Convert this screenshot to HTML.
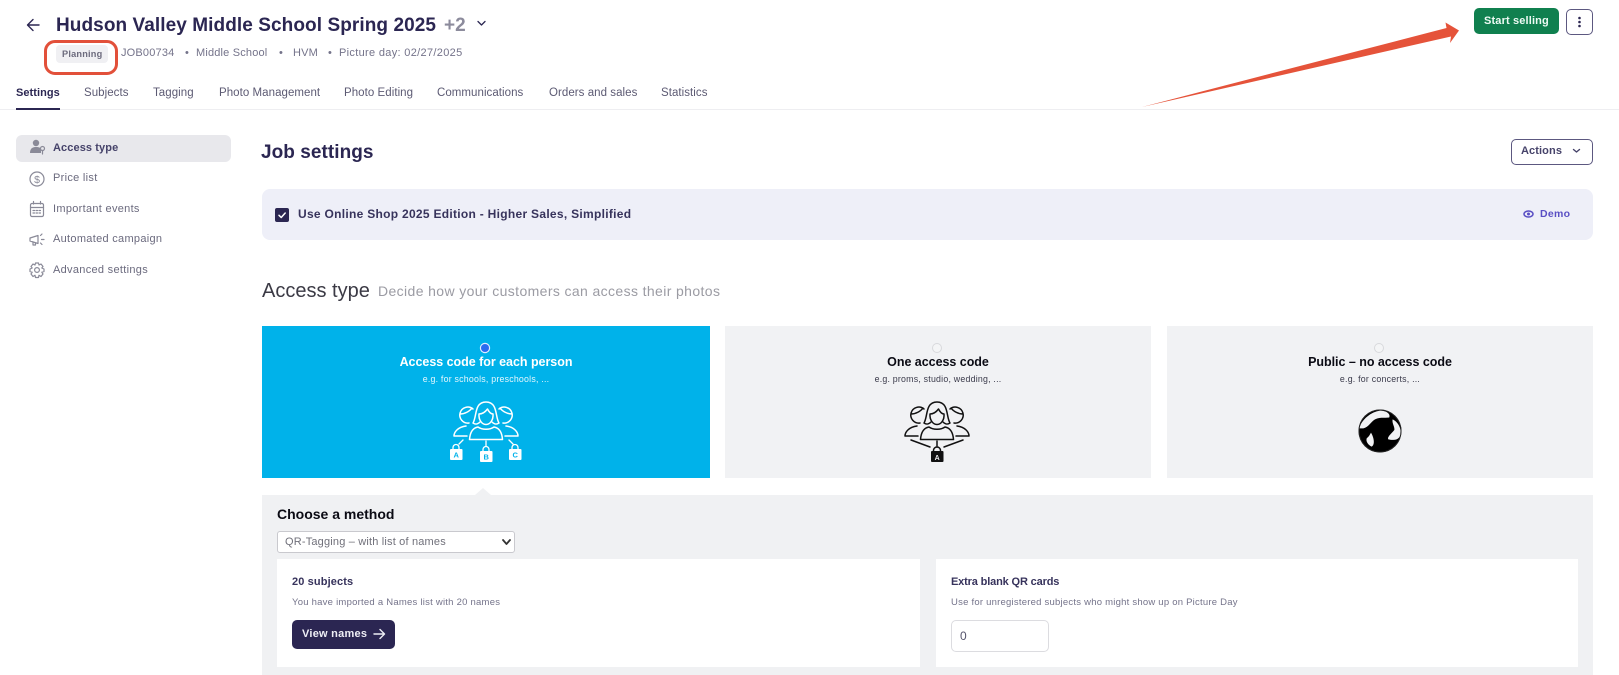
<!DOCTYPE html>
<html lang="en"><head><meta charset="utf-8"><title>Job settings</title>
<style>
html,body{margin:0;padding:0;background:#fff}
body{position:relative;width:1619px;height:675px;overflow:hidden;font-family:"Liberation Sans",sans-serif;color:#2b2652;filter:blur(.3px)}
.t{position:absolute;white-space:nowrap;line-height:20px;height:20px}
.b{position:absolute;box-sizing:border-box}
.tab{font-size:11.5px;letter-spacing:.05px;color:#5c5a73;top:83px}
.side{font-size:11px;letter-spacing:.3px;color:#6b6a7e;left:53px}
.meta{font-size:11px;letter-spacing:.18px;color:#74738a;top:43px}
.head{font-size:12.5px;font-weight:bold;letter-spacing:-.03px;color:#0b0b14;text-align:center;top:352px}
.sub{font-size:8.8px;letter-spacing:.22px;color:#3a3a4a;text-align:center;top:369px}
svg{position:absolute;left:0;top:0;overflow:visible}
</style></head><body>

<!-- header -->
<div class="t" style="left:56px;top:15px;font-size:19px;line-height:22px;height:22px;font-weight:bold;letter-spacing:.08px;color:#2b2652">Hudson Valley Middle School Spring 2025</div>
<div class="t" style="left:444px;top:15px;font-size:19px;line-height:22px;height:22px;font-weight:bold;color:#8c8b9c">+2</div>
<div class="b" style="left:56px;top:45px;width:52px;height:18px;background:#f0f0f3;border-radius:4px"></div>
<div class="t" style="left:62px;top:44px;font-size:9.2px;font-weight:bold;letter-spacing:.2px;color:#6c6b7d">Planning</div>
<div class="t meta" style="left:121px">JOB00734</div>
<div class="t meta" style="left:185px">•</div>
<div class="t meta" style="left:196px">Middle School</div>
<div class="t meta" style="left:279px">•</div>
<div class="t meta" style="left:293px">HVM</div>
<div class="t meta" style="left:328px">•</div>
<div class="t meta" style="left:339px;letter-spacing:.32px">Picture day: 02/27/2025</div>
<div class="b" style="left:44px;top:40px;width:74px;height:35px;border:3px solid #e2503a;border-radius:11px"></div>

<div class="t tab" style="left:16px;color:#2b2652;font-weight:bold;font-size:11px">Settings</div>
<div class="t tab" style="left:84px">Subjects</div>
<div class="t tab" style="left:153px">Tagging</div>
<div class="t tab" style="left:219px">Photo Management</div>
<div class="t tab" style="left:344px">Photo Editing</div>
<div class="t tab" style="left:437px">Communications</div>
<div class="t tab" style="left:549px">Orders and sales</div>
<div class="t tab" style="left:661px">Statistics</div>
<div class="b" style="left:0;top:109px;width:1619px;height:1px;background:#eeeef1"></div>
<div class="b" style="left:16px;top:108px;width:44px;height:2px;background:#2b2652"></div>

<div class="b" style="left:1474px;top:8px;width:85px;height:26px;background:#10804f;border-radius:5px"></div>
<div class="t" style="left:1484px;top:11px;font-size:11px;font-weight:bold;letter-spacing:.15px;color:#eefaf4">Start selling</div>
<div class="b" style="left:1566px;top:9px;width:27px;height:26px;border:1px solid #5c5880;border-radius:5px;background:#fff"></div>

<div class="t" style="left:261px;top:143px;font-size:19px;font-weight:bold;letter-spacing:.05px">Job settings</div>
<div class="b" style="left:1511px;top:139px;width:82px;height:26px;border:1px solid #5c5880;border-radius:5px"></div>
<div class="t" style="left:1521px;top:141px;font-size:11px;font-weight:bold;letter-spacing:.1px;color:#46436a">Actions</div>

<!-- sidebar -->
<div class="b" style="left:16px;top:135px;width:215px;height:27px;background:#e8e8ec;border-radius:6px"></div>
<div class="t side" style="top:138px;font-weight:bold;color:#46436a;letter-spacing:.1px">Access type</div>
<div class="t side" style="top:168px">Price list</div>
<div class="t side" style="top:199px">Important events</div>
<div class="t side" style="top:229px">Automated campaign</div>
<div class="t side" style="top:260px">Advanced settings</div>

<!-- banner -->
<div class="b" style="left:262px;top:189px;width:1331px;height:51px;background:#eeeff8;border-radius:8px"></div>
<div class="b" style="left:275px;top:208px;width:14px;height:14px;background:#2b2652;border-radius:2px"></div>
<div class="t" style="left:298px;top:204px;font-size:12px;font-weight:bold;letter-spacing:.29px;color:#37335c">Use Online Shop 2025 Edition - Higher Sales, Simplified</div>
<div class="t" style="left:1540px;top:204px;font-size:10.5px;font-weight:bold;letter-spacing:.3px;color:#5a4fc4">Demo</div>

<div class="t" style="left:262px;top:281px;font-size:20px;letter-spacing:0;color:#3b3a45">Access type</div>
<div class="t" style="left:378px;top:281px;font-size:14px;letter-spacing:.38px;color:#9b9ba3">Decide how your customers can access their photos</div>

<!-- cards -->
<div class="b" style="left:262px;top:326px;width:448px;height:152px;background:#00b2ea"></div>
<div class="b" style="left:725px;top:326px;width:426px;height:152px;background:#f1f2f4"></div>
<div class="b" style="left:1167px;top:326px;width:426px;height:152px;background:#f1f2f4"></div>
<div class="b" style="left:481px;top:344px;width:8px;height:8px;border-radius:50%;background:#2a6bf0;box-shadow:0 0 0 1.2px #dfeaff"></div>
<div class="b" style="left:933px;top:344px;width:8px;height:8px;border-radius:50%;background:#f4f5f6;box-shadow:0 0 0 1px #d8d9dc"></div>
<div class="b" style="left:1375px;top:344px;width:8px;height:8px;border-radius:50%;background:#f4f5f6;box-shadow:0 0 0 1px #d8d9dc"></div>
<div class="t head" style="left:262px;width:448px;color:#fff">Access code for each person</div>
<div class="t sub" style="left:262px;width:448px;color:#e6f7fd">e.g. for schools, preschools, ...</div>
<div class="t head" style="left:725px;width:426px">One access code</div>
<div class="t sub" style="left:725px;width:426px">e.g. proms, studio, wedding, ...</div>
<div class="t head" style="left:1167px;width:426px">Public – no access code</div>
<div class="t sub" style="left:1167px;width:426px">e.g. for concerts, ...</div>

<!-- method panel -->
<div class="b" style="left:262px;top:495px;width:1331px;height:180px;background:#f0f1f3"></div>
<div class="t" style="left:277px;top:504px;font-size:14px;font-weight:bold;letter-spacing:0;color:#0b0b14">Choose a method</div>
<div class="b" style="left:277px;top:531px;width:238px;height:22px;background:#fff;border:1px solid #c9c9ce;border-radius:3px"></div>
<div class="t" style="left:285px;top:532px;font-size:11px;letter-spacing:.18px;color:#70707a">QR-Tagging – with list of names</div>
<div class="b" style="left:277px;top:559px;width:643px;height:108px;background:#fff"></div>
<div class="b" style="left:936px;top:559px;width:642px;height:108px;background:#fff"></div>
<div class="t" style="left:292px;top:572px;font-size:11px;font-weight:bold;letter-spacing:.12px;color:#37335c">20 subjects</div>
<div class="t" style="left:292px;top:593px;font-size:9.5px;letter-spacing:.24px;color:#74738a">You have imported a Names list with 20 names</div>
<div class="b" style="left:292px;top:620px;width:103px;height:29px;background:#2b2652;border-radius:5px"></div>
<div class="t" style="left:302px;top:624px;font-size:11px;font-weight:bold;letter-spacing:.25px;color:#eeeef5">View names</div>
<div class="t" style="left:951px;top:572px;font-size:11px;font-weight:bold;letter-spacing:-.15px;color:#37335c">Extra blank QR cards</div>
<div class="t" style="left:951px;top:593px;font-size:9.5px;letter-spacing:.23px;color:#74738a">Use for unregistered subjects who might show up on Picture Day</div>
<div class="b" style="left:951px;top:620px;width:98px;height:32px;border:1px solid #dcdce0;border-radius:5px;background:#fff"></div>
<div class="t" style="left:960px;top:626px;font-size:12px;color:#55546c">0</div>

<svg width="1619" height="675" viewBox="0 0 1619 675" fill="none" stroke-linecap="round" stroke-linejoin="round">
  <defs>
    <g id="people" stroke-width="1.5">
      <path d="M-13 423C-9 417-12 402 0 402C12 402 9 417 13 423C10 425 8 424 6 422M-13 423C-10 425-8 424-6 422"/>
      <path d="M-7 414C-3 414 0 411 1.500 409C3 412 5 414 7 414C7.500 420 4 424.500 0 424.500S-7.500 420-7 414Z"/>
      <path d="M-16.500 439.500C-16 433-14 428-8 427C-4 430 4 430 8 427C14 428 16 433 16.500 439.500Z"/>
      <path d="M-13 409A8 8 0 1 0-17 423M-26 414C-21 414-16 411-14 408"/>
      <path d="M13 409A8 8 0 1 1 17 423M26 414C21 414 16 411 14 408"/>
      <path d="M-20 426C-28 427-32 432-32 436H-19M20 426C28 427 32 432 32 436H19"/>
    </g>
  </defs>

  <!-- back arrow / title chevron -->
  <path d="M39 25H28M33 19.500L27.500 25L33 30.500" stroke="#2b2652" stroke-width="1.400"/>
  <path d="M478 21.500L481.500 25L485 21.500" stroke="#2b2652" stroke-width="1.300"/>

  <!-- annotation arrow -->
  <path d="M1142 107L1446.500 28L1445.500 22.500L1459 30.500L1450 43L1451 36.500Z" fill="#e5533a"/>

  <!-- more menu dots -->
  <g fill="#2b2652"><circle cx="1579.500" cy="18" r="1.300"/><circle cx="1579.500" cy="22" r="1.300"/><circle cx="1579.500" cy="26" r="1.300"/></g>
  <path d="M1573.500 149.500L1576.500 152L1579.500 149.500" stroke="#46436a" stroke-width="1.400"/>

  <!-- sidebar icons -->
  <g fill="#8a8a98"><circle cx="36" cy="143" r="3.200"/><path d="M30 153C30 148 33 147 36 147S41 148 41 149V153Z"/></g>
  <g stroke="#8a8a98" stroke-width="1.200"><circle cx="42.500" cy="148.500" r="2"/><path d="M42.500 150.500V154"/></g>
  <circle cx="37" cy="179" r="7" stroke="#8a8a98" stroke-width="1.200"/>
  <text x="37" y="183" font-size="10.500" text-anchor="middle" fill="#8a8a98" font-family="Liberation Sans, sans-serif">$</text>
  <g stroke="#8a8a98" stroke-width="1.200"><rect x="30.500" y="203.500" width="13" height="13" rx="1.500"/><path d="M30.500 207.500H43.500M33.500 201.500V204M40.500 201.500V204"/><path d="M33 210.500H41M33 213H41" stroke-dasharray="1.500 1.500"/></g>
  <g stroke="#8a8a98" stroke-width="1.200"><path d="M30 238V241L38 243.500V235.500ZM33 242V245H35.500V243"/><path d="M40.500 235.500L42 234M41.500 239.500H44M40.500 243L42 244.500"/></g>
  <g stroke="#8a8a98" stroke-width="1.200"><circle cx="37" cy="270" r="2.400"/><path d="M35.500 263H38.500L39 265L41 264L43 266.500L41.800 268L44 269V271.500L41.800 272.200L43 274L41 276.500L39 275.200L38.500 277.500H35.500L35 275.200L33 276.500L31 274L32.200 272.200L30 271.500V269L32.200 268L31 266.500L33 264L35 265Z"/></g>

  <!-- checkbox / demo eye -->
  <path d="M279 215.300L281.200 217.500L285.200 213" stroke="#fff" stroke-width="1.500"/>
  <ellipse cx="1528.500" cy="214" rx="4.500" ry="3" stroke="#5a4fc4" stroke-width="1.500"/><circle cx="1528.500" cy="214" r="1.500" fill="#5a4fc4"/>

  <!-- blue card icon -->
  <g transform="translate(486 0)" stroke="#fff">
    <use href="#people"/>
    <path d="M-23 440L-27 444M0 441V446M23 440L27 444" stroke-width="1.300"/>
    <g stroke-width="1.300">
      <path d="M-33 449V447.500A3 3 0 0 1-27 447.500V449M-3 451V449.500A3 3 0 0 1 3 449.500V451M26 449V447.500A3 3 0 0 1 32 447.500V449"/>
    </g>
    <g fill="#fff" stroke="none"><rect x="-36" y="449" width="12.500" height="11" rx="1"/><rect x="-6" y="451" width="12.500" height="11" rx="1"/><rect x="23" y="449" width="12.500" height="11" rx="1"/></g>
    <g fill="#00b2ea" stroke="none" font-family="Liberation Sans, sans-serif" font-size="7.500" font-weight="bold" text-anchor="middle"><text x="-29.800" y="457.500">A</text><text x=".2" y="459.500">B</text><text x="29.200" y="457.500">C</text></g>
  </g>

  <!-- gray card icon -->
  <g transform="translate(937 0)" stroke="#111">
    <use href="#people"/>
    <path d="M-26 440L-7 447M0 441V446M26 440L7 447" stroke-width="1.500"/>
    <path d="M-3.500 452V450.500A3.500 3.500 0 0 1 3.500 450.500V452" stroke-width="1.500"/>
    <rect x="-6" y="451" width="12.500" height="11" rx="1" fill="#111" stroke="none"/>
    <text x=".2" y="459.800" fill="#f1f2f4" stroke="none" font-family="Liberation Sans, sans-serif" font-size="7" font-weight="bold" text-anchor="middle">A</text>
  </g>

  <!-- globe -->
  <circle cx="1380" cy="431" r="21.500" fill="#000"/>
  <g transform="translate(1345 400) scale(.3333)" fill="#f1f2f4">
    <path d="M43 85C50 58 78 36 105 32C125 32 137 42 133 52C120 55 105 50 90 58C78 65 70 82 55 85Z"/>
    <path d="M143 58C158 65 170 85 167 105C160 120 150 122 130 118C125 112 140 100 148 90C150 80 140 70 143 58Z"/>
    <path d="M78 98C88 115 90 135 80 140C70 135 62 125 65 115C72 110 74 105 78 98Z"/>
  </g>
  <circle cx="1380" cy="431" r="21" stroke="#222" stroke-width="1"/>

  <!-- panel notch / select chevron / button arrow -->
  <path d="M475 495L483 488L491 495Z" fill="#f0f1f3"/>
  <path d="M503 540L506.500 544L510 540" stroke="#333" stroke-width="1.800"/>
  <path d="M374 634H384M380 629.500L384.500 634L380 638.500" stroke="#eeeef5" stroke-width="1.400"/>
</svg>
</body></html>
